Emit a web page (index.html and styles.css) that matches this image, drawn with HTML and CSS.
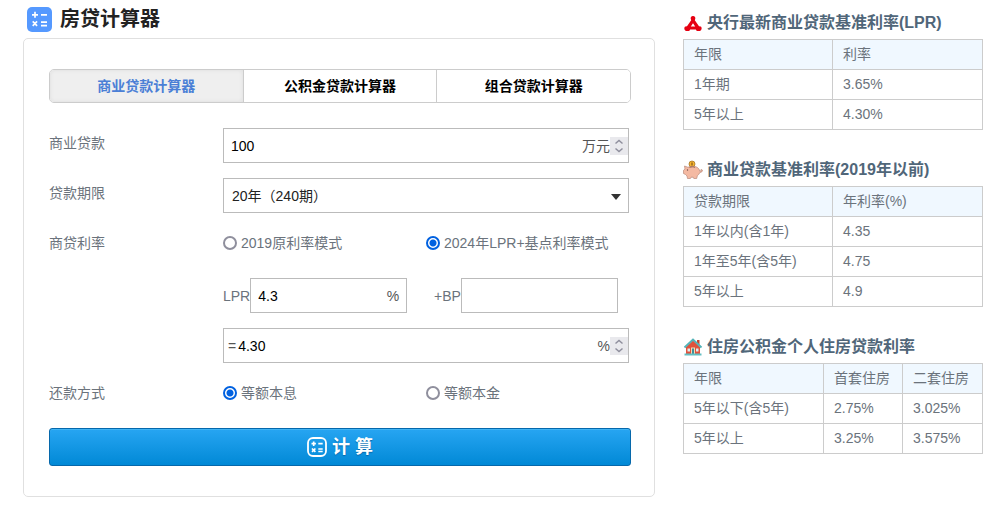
FILE: index.html
```html
<!DOCTYPE html>
<html lang="zh-CN">
<head>
<meta charset="utf-8">
<title>房贷计算器</title>
<link rel="stylesheet" href="styles.css">
</head>
<body>
<div class="page">
  <main class="main">
    <h1 class="title">
      <svg class="title-icon" viewBox="0 0 25 25" aria-hidden="true">
        <rect width="25" height="25" rx="5" fill="#5599ff"/>
        <path d="M8 4.8v6M5 7.8h6M14 7.8h6M5.700 14.400l4.400 4.400M10.100 14.400l-4.400 4.400M14 15.200h6M14 18.600h6" fill="none" stroke="#fff" stroke-width="1.700"/>
      </svg>
      房贷计算器
    </h1>
    <form class="card">
      <div class="tabs" role="tablist">
        <button class="tab tab-active" type="button" role="tab" aria-selected="true">商业贷款计算器</button>
        <button class="tab" type="button" role="tab" aria-selected="false">公积金贷款计算器</button>
        <button class="tab" type="button" role="tab" aria-selected="false">组合贷款计算器</button>
      </div>
      <div class="rows">
        <div class="row">
          <label class="label" for="amount">商业贷款</label>
          <div class="box">
            <input class="input" id="amount" type="number" value="100">
            <span class="unit">万元</span>
            <svg class="spin" viewBox="0 0 18 18" aria-hidden="true"><path d="M5.500 6.500L9 3.500l3.500 3M5.500 11.500l3.500 3 3.500-3"/></svg>
          </div>
        </div>
        <div class="row">
          <label class="label" for="term">贷款期限</label>
          <div class="box">
            <select class="input select" id="term"><option>20年（240期）</option></select>
            <svg class="arrow" viewBox="0 0 10 6" aria-hidden="true"><path d="M0 0h10L5 6z" fill="#333"/></svg>
          </div>
        </div>
        <div class="row" role="radiogroup" aria-labelledby="mode-label">
          <span class="label" id="mode-label">商贷利率</span>
          <div class="halves">
            <label class="choice"><input class="radio" type="radio" name="mode">2019原利率模式</label>
            <label class="choice"><input class="radio" type="radio" name="mode" checked>2024年LPR+基点利率模式</label>
          </div>
        </div>
        <div class="row">
          <div class="halves field">
            <div class="pair">
              <label for="lpr">LPR</label>
              <div class="box box-small">
                <input class="input" id="lpr" type="text" value="4.3">
                <span class="unit unit-end">%</span>
              </div>
            </div>
            <div class="pair pair-bp">
              <label for="bp">+BP</label>
              <div class="box box-small"><input class="input" id="bp" type="text"></div>
            </div>
          </div>
        </div>
        <div class="row">
          <div class="box field">
            <label class="equals" for="rate">=</label>
            <input class="input input-rate" id="rate" type="number" value="4.30" step="0.01">
            <span class="unit">%</span>
            <svg class="spin" viewBox="0 0 18 18" aria-hidden="true"><path d="M5.500 6.500L9 3.500l3.500 3M5.500 11.500l3.500 3 3.500-3"/></svg>
          </div>
        </div>
        <div class="row" role="radiogroup" aria-labelledby="pay-label">
          <span class="label" id="pay-label">还款方式</span>
          <div class="halves">
            <label class="choice"><input class="radio" type="radio" name="pay" checked>等额本息</label>
            <label class="choice"><input class="radio" type="radio" name="pay">等额本金</label>
          </div>
        </div>
      </div>
      <button class="submit" type="submit">
        <svg class="submit-icon" viewBox="0 0 20 20" aria-hidden="true">
          <rect x="1" y="1" width="18" height="18" rx="5" fill="none" stroke="#fff" stroke-width="1.800"/>
          <path d="M6.700 4.500v4.400M4.500 6.700h4.400M11.300 6.700h4.400M5 11.500l3.400 3.400M8.400 11.500L5 14.900M11.300 12h4.400M11.300 14.500h4.400" fill="none" stroke="#fff" stroke-width="1.700"/>
        </svg>
        计 算
      </button>
    </form>
  </main>
  <aside class="side">
    <section>
      <h2 class="heading">
        <svg class="heading-icon" viewBox="0 0 20 20" aria-hidden="true">
          <path d="M10 3a2.200 2.200 0 0 1 2.300 2.700l-.5 1.500 4.200 6 1.600.3c1.500.7 1.500 3.500-.6 4.500h-3.200l-1-1.500H7.200l-1 1.500H3c-2.100-1-2.100-3.800-.6-4.500l1.600-.3 4.200-6-.5-1.500A2.200 2.200 0 0 1 10 3zM10 10.200l-2.200 3.300h4.400z" fill="#e60012" fill-rule="evenodd"/>
        </svg>
        央行最新商业贷款基准利率(LPR)
      </h2>
      <table class="table">
        <thead><tr><th class="half">年限</th><th>利率</th></tr></thead>
        <tbody>
          <tr><td>1年期</td><td>3.65%</td></tr>
          <tr><td>5年以上</td><td>4.30%</td></tr>
        </tbody>
      </table>
    </section>
    <section>
      <h2 class="heading">
        <svg class="heading-icon" viewBox="0 0 20 20" aria-hidden="true">
          <circle cx="9" cy="4" r="3" fill="#f5b52e" stroke="#9b6a20" stroke-width=".7"/>
          <path d="M9 2.500v3" stroke="#6d4515" stroke-width="1"/>
          <path d="M1.500 6l3.500 1.300c2.500-1.300 6-1.500 8.500-.3 2 1 3 2.500 3.200 4.200l1.300-.3v-1.500l1.500.8-.5 1.500-2.300 1c-.5 1.400-1.300 2.200-2.300 2.900L13.700 18.500h-2.900l-.6-1.300H8L7.400 18.500H4.500L4 16l-1.500-1.500L.5 13.500v-3.200L2 9z" fill="#f4b9a2" stroke="#b98a7b" stroke-width=".7"/>
          <path d="M6.500 7.400c2-.7 4-.7 5.500 0" fill="none" stroke="#8d5d50" stroke-width=".9"/>
          <circle cx="4.500" cy="10" r=".7" fill="#6d4a45"/>
        </svg>
        商业贷款基准利率(2019年以前)
      </h2>
      <table class="table">
        <thead><tr><th class="half">贷款期限</th><th>年利率(%)</th></tr></thead>
        <tbody>
          <tr><td>1年以内(含1年)</td><td>4.35</td></tr>
          <tr><td>1年至5年(含5年)</td><td>4.75</td></tr>
          <tr><td>5年以上</td><td>4.9</td></tr>
        </tbody>
      </table>
    </section>
    <section>
      <h2 class="heading">
        <svg class="heading-icon" viewBox="0 0 20 20" aria-hidden="true">
          <path d="M14 3h2.500v5H14z" fill="#c8452f"/>
          <path d="M3 10l7-6.500 7 6.500v7H3z" fill="#e0523c"/>
          <path d="M1.500 10.500L10 2.500l8.500 8" fill="none" stroke="#53b3b8" stroke-width="2"/>
          <path d="M4.500 11.500h2.500v3H4.500zM13 11.500h2.500v3H13z" fill="#d9eef0"/>
          <path d="M8 10.500h4V17H8z" fill="#f6d9b5"/>
          <path d="M9 11.500h2V17H9z" fill="#3f8e9a"/>
          <path d="M1.500 16.500h17v2h-17z" fill="#62bfc3"/>
        </svg>
        住房公积金个人住房贷款利率
      </h2>
      <table class="table">
        <thead><tr><th class="wide">年限</th><th class="narrow">首套住房</th><th>二套住房</th></tr></thead>
        <tbody>
          <tr><td>5年以下(含5年)</td><td>2.75%</td><td>3.025%</td></tr>
          <tr><td>5年以上</td><td>3.25%</td><td>3.575%</td></tr>
        </tbody>
      </table>
    </section>
  </aside>
</div>
</body>
</html>
```
FILE: styles.css
```css
* {
  box-sizing: border-box;
}

body {
  margin: 0;
  background: #fff;
  color: #6b737c;
  font: 14px/30px "Liberation Sans", "Noto Sans CJK SC", sans-serif;
}

button,
input,
select {
  font: inherit;
}

.page {
  display: flex;
  align-items: flex-start;
  gap: 28px;
  padding: 0 21px 14px 23px;
}

.main {
  flex: 1;
  min-width: 0;
}

.title {
  display: flex;
  align-items: center;
  gap: 8px;
  margin: 0;
  padding: 0 4px;
  color: #222;
  font-size: 20px;
  line-height: 38px;
}

.title-icon {
  width: 25px;
  height: 25px;
}

.card {
  padding: 30px 23px 30px 25px;
  border: 1px solid #e0e0e0;
  border-radius: 5px;
}

.tabs {
  display: flex;
  overflow: hidden;
  border: 1px solid #ccc;
  border-radius: 5px;
}

.tab {
  flex: 1;
  height: 32px;
  padding: 0;
  border: 0;
  border-left: 1px solid #ccc;
  background: #fff;
  color: #000;
  font-weight: bold;
  line-height: 32px;
}

.tab-active {
  border-left: 0;
  background: #efefef;
  box-shadow: inset 0 0 4px #ddd;
  color: #4b7fd6;
}

.rows {
  display: grid;
  gap: 15px;
  margin: 25px 2px 15px 0;
}

.row {
  display: grid;
  grid-template-columns: 174px 1fr;
  height: 35px;
}

.field {
  grid-column: 2;
}

.box {
  position: relative;
  display: flex;
  align-items: center;
  border: 1px solid #bbb;
}

.box-small {
  width: 157px;
  height: 35px;
}

.input {
  flex: 1;
  min-width: 0;
  height: 33px;
  padding: 0 7px;
  border: 0;
  outline: 0;
  background: transparent;
  color: #000;
  appearance: none;
}

.input[type="number"] {
  appearance: textfield;
}

.select {
  padding: 0 8px;
  color: #222;
}

.input-rate {
  padding: 0;
}

.equals {
  padding: 0 2px 0 4px;
  color: #555;
}

.unit {
  color: #555;
}

.unit-end {
  padding-right: 7px;
}

.spin {
  width: 18px;
  height: 18px;
  background: #e9e9ed;
  fill: none;
  stroke: #8f8f9d;
  stroke-width: 1.5;
}

.arrow {
  position: absolute;
  right: 7px;
  top: 15px;
  width: 10px;
  height: 6px;
  pointer-events: none;
}

.halves {
  display: grid;
  grid-template-columns: 1fr 1fr;
}

.choice {
  display: flex;
  align-items: center;
  gap: 4px;
  height: 30px;
  white-space: nowrap;
}

.radio {
  width: 14px;
  height: 14px;
  margin: 0;
  border: 2px solid #8f8f9d;
  border-radius: 50%;
  background: #fff;
  appearance: none;
}

.radio:checked {
  border-color: #0061e0;
  background: radial-gradient(circle, #0061e0 3px, #fff 4px);
}

.pair {
  display: flex;
  align-items: center;
}

.pair-bp {
  padding-left: 8px;
}

.submit {
  display: flex;
  align-items: center;
  justify-content: center;
  gap: 5px;
  width: 100%;
  height: 38px;
  padding: 0;
  border: 1px solid #0668ab;
  border-radius: 3px;
  background: linear-gradient(#27a5f2, #0189d6);
  box-shadow: inset 0 1px #3fb4f5;
  color: #fff;
  font-size: 18px;
  font-weight: bold;
  line-height: 36px;
  text-shadow: 0 1px 1px #0668ab;
}

.submit-icon {
  width: 20px;
  height: 20px;
}

.side {
  display: grid;
  flex: 0 0 300px;
  gap: 24px;
  padding-top: 7px;
}

.heading {
  display: flex;
  align-items: center;
  gap: 4px;
  margin: 0;
  color: #506679;
  font-size: 16px;
  line-height: 32px;
  white-space: nowrap;
}

.heading-icon {
  width: 20px;
  height: 20px;
}

.table {
  width: 100%;
  border-collapse: collapse;
  table-layout: fixed;
}

.table th,
.table td {
  padding: 0 10px;
  border: 1px solid #ccc;
  font-weight: normal;
  line-height: 29px;
  text-align: left;
  white-space: nowrap;
}

.table th {
  background: #f0f8ff;
}

.half {
  width: 149px;
}

.wide {
  width: 140px;
}

.narrow {
  width: 79px;
}
```
